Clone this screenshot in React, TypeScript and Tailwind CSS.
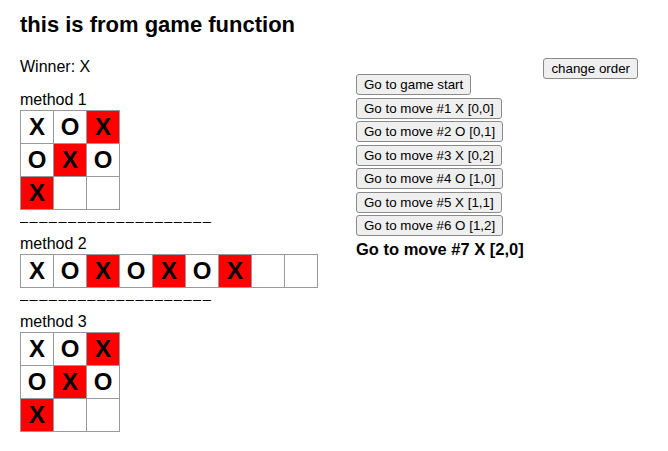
import React from "react";

const squares = ["X", "O", "X", "O", "X", "O", "X", null, null];
const winLine = [2, 4, 6];
const moves = [
  "Go to game start",
  "Go to move #1 X [0,0]",
  "Go to move #2 O [0,1]",
  "Go to move #3 X [0,2]",
  "Go to move #4 O [1,0]",
  "Go to move #5 X [1,1]",
  "Go to move #6 O [1,2]",
];

const Square = ({ i }: { i: number }) => (
  <button
    className={`w-[34px] h-[34px] -mr-px -mt-px border border-[#999] p-0 text-[24px] font-bold leading-[32px] text-center text-black ${
      winLine.includes(i) ? "bg-[#ff0000]" : "bg-white"
    }`}
  >
    {squares[i]}
  </button>
);

const Label = ({ text }: { text: string }) => (
  <div className="text-[16px] leading-[18px] mb-[2px]">{text}</div>
);

const Dashes = () => (
  <div className="h-[25px] text-[14.6px] leading-[22px] tracking-[1.5px] overflow-hidden whitespace-nowrap">
    ––––––––––––––––––––
  </div>
);

const Grid = () => (
  <div className="flex flex-col">
    {[0, 1, 2].map((r) => (
      <div key={r} className="flex">
        {[0, 1, 2].map((c) => (
          <Square key={c} i={r * 3 + c} />
        ))}
      </div>
    ))}
  </div>
);

const Btn = ({ children }: { children: React.ReactNode }) => (
  <button className="block h-[21px] px-[7px] border border-[#8a8a8a] rounded-[3px] bg-[#efefef] text-[13.33px] leading-[17px] text-black whitespace-nowrap">
    {children}
  </button>
);

export default function App() {
  return (
    <div className="min-h-[451px] bg-white px-[20px] text-black font-['Liberation_Sans',Arial,sans-serif]">
      <h2 className="pt-[12px] text-[22px] leading-[26px] font-bold">this is from game function</h2>
      <div className="flex mt-[20px]">
        <div className="w-[336px] shrink-0">
          <div className="text-[16px] leading-[18px]">Winner: X</div>
          <div className="mt-[15px]">
            <Label text="method 1" />
            <Grid />
          </div>
          <Dashes />
          <Label text="method 2" />
          <div className="flex">
            {squares.map((_, i) => (
              <Square key={i} i={i} />
            ))}
          </div>
          <Dashes />
          <Label text="method 3" />
          <Grid />
        </div>
        <div className="mt-[16px]">
          <ol className="flex flex-col">
            {moves.map((m) => (
              <li key={m} className="h-[23.5px]">
                <Btn>{m}</Btn>
              </li>
            ))}
          </ol>
          <div className="mt-[1.5px] text-[16.5px] leading-[18px] font-bold whitespace-nowrap">
            Go to move #7 X [2,0]
          </div>
        </div>
        <div className="ml-auto mr-[10px]">
          <Btn>change order</Btn>
        </div>
      </div>
    </div>
  );
}
